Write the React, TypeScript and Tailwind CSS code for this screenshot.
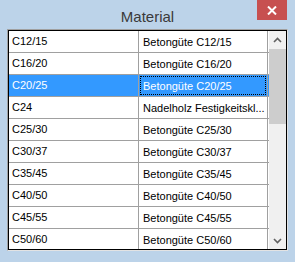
import React from "react";

const rows = [
	["C12/15", "Betongüte C12/15"],
	["C16/20", "Betongüte C16/20"],
	["C20/25", "Betongüte C20/25"],
	["C24", "Nadelholz Festigkeitsklasse C24"],
	["C25/30", "Betongüte C25/30"],
	["C30/37", "Betongüte C30/37"],
	["C35/45", "Betongüte C35/45"],
	["C40/50", "Betongüte C40/50"],
	["C45/55", "Betongüte C45/55"],
	["C50/60", "Betongüte C50/60"],
];

const selected = 2;

// cell is too narrow for long names, cut them like the grid does
const clip = (s: string) => (s.length > 24 ? s.slice(0, 23) + "..." : s);

function Row({ code, name, active }: { code: string; name: string; active: boolean }) {
	return (
		<div className={`flex h-[22px] border-b border-[#a0a0a0] ${active ? "bg-[#3399ff] text-white" : "bg-white text-black"}`}>
			<div className="w-[130px] shrink-0 border-r border-[#a0a0a0] pl-[3px] leading-[21px]">{code}</div>
			<div className="w-[129px] shrink-0 border-r border-[#a0a0a0] p-px">
				<div className={`h-full pl-[2px] leading-[19px] whitespace-nowrap ${active ? "border border-dotted border-black" : "border border-transparent"}`}>
					{clip(name)}
				</div>
			</div>
		</div>
	);
}

function ScrollBar() {
	return (
		<div className="w-[17px] shrink-0 bg-[#f0f0f0] flex flex-col">
			<div className="h-[17px] flex items-center justify-center">
				<svg width="9" height="6" viewBox="0 0 9 6"><path d="M1 5 L4.5 1.5 L8 5" fill="none" stroke="#606060" strokeWidth="1.6" /></svg>
			</div>
			<div className="mt-px h-[75px] bg-[#cdcdcd]" />
			<div className="flex-1" />
			<div className="h-[17px] flex items-center justify-center">
				<svg width="9" height="6" viewBox="0 0 9 6"><path d="M1 1 L4.5 4.5 L8 1" fill="none" stroke="#606060" strokeWidth="1.6" /></svg>
			</div>
		</div>
	);
}

export default function App() {
	return (
		<div className="w-[295px] h-[262px] bg-[#bcd3e9] flex flex-col font-['Liberation_Sans',Arial,sans-serif] overflow-hidden">
			<div className="relative h-[29px] flex items-center justify-center">
				<span className="text-[15px] text-[#3a3a3a] leading-none mt-[3px]">Material</span>
				<div className="absolute top-0 left-[257px] w-[30px] h-[20px] bg-[#c75050] flex items-center justify-center">
					<svg width="10" height="9" viewBox="0 0 10 9"><path d="M1 0.5 L9 8.5 M9 0.5 L1 8.5" stroke="white" strokeWidth="2" /></svg>
				</div>
			</div>
			<div className="ml-[7px] w-[281px] h-[222px] border border-t-[#a0a0a0] border-l-[#a0a0a0] border-r-[#e3e3e3] border-b-[#e3e3e3]">
				<div className="h-full border border-black bg-white flex overflow-hidden">
					<div className="flex-1 overflow-hidden text-[11px]">
						{rows.map((r, i) => <Row key={i} code={r[0]} name={r[1]} active={i === selected} />)}
					</div>
					<ScrollBar />
				</div>
			</div>
		</div>
	);
}
